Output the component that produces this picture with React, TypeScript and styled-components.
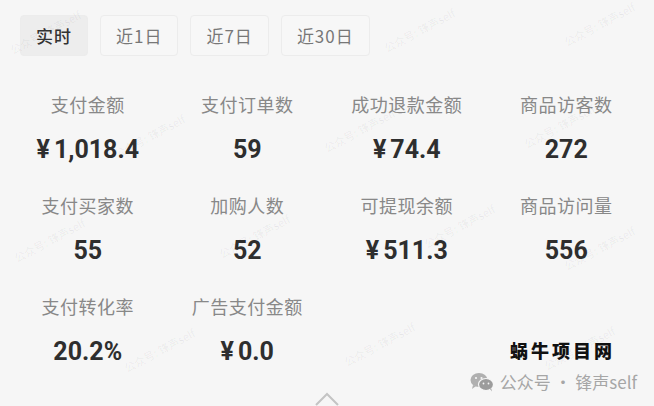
import React, { useState } from "react";
import styled, { createGlobalStyle } from "styled-components";

const GlobalStyle = createGlobalStyle`
  html, body {
    margin: 0;
    padding: 0;
    background: #f6f6f6;
  }
  body {
    font-family: "Noto Sans CJK SC", "Noto Sans", sans-serif;
  }
`;

const Page = styled.div`
  position: relative;
  width: 654px;
  height: 406px;
  overflow: hidden;
  background: #f6f6f6;
  padding: 15px 8px 0;
  box-sizing: border-box;
`;

const Tabs = styled.div`
  display: flex;
  gap: 12px;
  padding-left: 12px;
`;

const Tab = styled.button<{ $active?: boolean }>`
  height: 41px;
  padding: 0 15px;
  border: 1px solid #ececec;
  border-radius: 4px;
  background: ${(p) => (p.$active ? "#ededed" : "#f7f7f7")};
  color: ${(p) => (p.$active ? "#333" : "#777")};
  font-family: "Noto Sans CJK SC", sans-serif;
  font-size: 17px;
  letter-spacing: 1px;
  font-weight: ${(p) => (p.$active ? 500 : 400)};
  cursor: pointer;
  outline: none;
`;

const Grid = styled.div`
  display: grid;
  grid-template-columns: repeat(4, 1fr);
  row-gap: 27px;
  margin-top: 36px;
`;

const Cell = styled.div`
  display: flex;
  flex-direction: column;
  align-items: center;
`;

const Label = styled.div`
  font-size: 18px;
  line-height: 24px;
  color: #888;
  letter-spacing: 0.5px;
`;

const Value = styled.div`
  margin-top: 18px;
  font-family: "Roboto", "Noto Sans CJK SC", sans-serif;
  font-size: 25px;
  line-height: 32px;
  font-weight: 700;
  color: #2e2e2e;
`;

const Yen = styled.span`
  margin-right: 4px;
`;

const Watermark = styled.div`
  position: absolute;
  font-family: "Noto Sans CJK SC", sans-serif;
  font-size: 11px;
  color: rgba(0, 0, 0, 0.06);
  transform: rotate(-28deg);
  white-space: nowrap;
  pointer-events: none;
`;

const Brand = styled.div`
  position: absolute;
  right: 17px;
  bottom: 12px;
  display: flex;
  flex-direction: column;
  align-items: flex-end;
  gap: 6px;
`;

const BrandTitle = styled.div`
  margin-right: 22px;
  font-size: 18px;
  font-weight: 900;
  letter-spacing: 3px;
  color: #111;
`;

const BrandSub = styled.div`
  display: flex;
  align-items: center;
  gap: 6px;
  font-size: 17px;
  color: #a6a6a6;
`;

const Chevron = styled.svg`
  position: absolute;
  left: 314px;
  bottom: 0;
`;

const metrics: { label: string; value: string; yen?: boolean }[] = [
  { label: "支付金额", value: "1,018.4", yen: true },
  { label: "支付订单数", value: "59" },
  { label: "成功退款金额", value: "74.4", yen: true },
  { label: "商品访客数", value: "272" },
  { label: "支付买家数", value: "55" },
  { label: "加购人数", value: "52" },
  { label: "可提现余额", value: "511.3", yen: true },
  { label: "商品访问量", value: "556" },
  { label: "支付转化率", value: "20.2%" },
  { label: "广告支付金额", value: "0.0", yen: true },
];

const marks: [number, number][] = [
  [6, 24], [380, 22], [560, 16],
  [110, 128], [320, 122], [520, 118],
  [10, 232], [215, 228], [420, 218], [560, 240],
  [120, 342], [340, 336], [540, 340],
];

const tabs = ["实时", "近1日", "近7日", "近30日"];

const App: React.FC = () => {
  const [active, setActive] = useState(0);
  return (
    <Page>
      <GlobalStyle />
      {marks.map(([x, y], i) => (
        <Watermark key={i} style={{ left: x, top: y }}>
          公众号: 锋声self
        </Watermark>
      ))}
      <Tabs>
        {tabs.map((t, i) => (
          <Tab key={t} $active={active === i} onClick={() => setActive(i)}>
            {t}
          </Tab>
        ))}
      </Tabs>
      <Grid>
        {metrics.map((m) => (
          <Cell key={m.label}>
            <Label>{m.label}</Label>
            <Value>
              {m.yen && <Yen>¥</Yen>}
              {m.value}
            </Value>
          </Cell>
        ))}
      </Grid>
      <Brand>
        <BrandTitle>蜗牛项目网</BrandTitle>
        <BrandSub>
          <svg width="24" height="20" viewBox="0 0 24 20">
            <ellipse cx="9" cy="8" rx="8.5" ry="7" fill="#b0b0b0" />
            <path d="M3 13 L2 17 L6 14 Z" fill="#b0b0b0" />
            <ellipse cx="16" cy="12.5" rx="7.5" ry="6" fill="#9c9c9c" stroke="#f6f6f6" strokeWidth="1.2" />
            <path d="M20 17 L22 19.5 L21 16 Z" fill="#9c9c9c" />
            <circle cx="6" cy="6" r="1.1" fill="#f6f6f6" />
            <circle cx="11.5" cy="6" r="1.1" fill="#f6f6f6" />
            <circle cx="13.5" cy="11.5" r="0.9" fill="#f6f6f6" />
            <circle cx="18.5" cy="11.5" r="0.9" fill="#f6f6f6" />
          </svg>
          公众号 · 锋声self
        </BrandSub>
      </Brand>
      <Chevron width="26" height="14" viewBox="0 0 26 14">
        <polyline points="2,13 13,2 24,13" fill="none" stroke="#c4c4c4" strokeWidth="2" />
      </Chevron>
    </Page>
  );
};

export default App;
